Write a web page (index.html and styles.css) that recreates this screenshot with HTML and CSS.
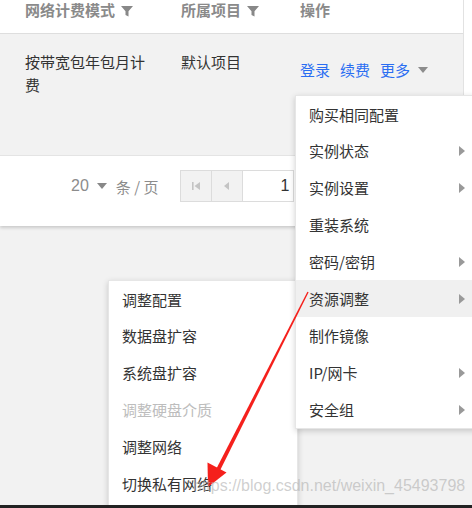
FILE: index.html
```html
<!DOCTYPE html>
<html lang="zh">
<head>
<meta charset="utf-8">
<link rel="stylesheet" href="styles.css">
</head>
<body>
<div class="page">
  <div class="card">
    <div class="table">
      <div class="thead">
        <div class="th">网络计费模式 <svg class="filter" viewBox="0 0 12 12"><path d="M0 1h12L7.5 6.2V11.5L4.5 10V6.2Z"/></svg></div>
        <div class="th">所属项目 <svg class="filter" viewBox="0 0 12 12"><path d="M0 1h12L7.5 6.2V11.5L4.5 10V6.2Z"/></svg></div>
        <div class="th">操作</div>
      </div>
      <div class="trow">
        <div class="td">按带宽包年包月计费</div>
        <div class="td">默认项目</div>
        <div class="td ops"><a>登录</a><a>续费</a><a>更多</a><span class="caret"></span></div>
      </div>
    </div>
    <div class="pager">
      <span class="size">20</span><span class="caret g"></span><span class="unit">条 / 页</span>
      <div class="pbox">
        <div class="pbtn"><svg viewBox="0 0 10 10"><path d="M1 1h1.6v8H1zM9 1v8L3.5 5z"/></svg></div>
        <div class="pbtn"><svg viewBox="0 0 10 10"><path d="M7 1v8L2 5z"/></svg></div>
        <div class="pinput">1</div>
      </div>
    </div>
  </div>

  <div class="submenu">
    <div class="mi">调整配置</div>
    <div class="mi">数据盘扩容</div>
    <div class="mi">系统盘扩容</div>
    <div class="mi disabled">调整硬盘介质</div>
    <div class="mi">调整网络</div>
    <div class="mi">切换私有网络</div>
  </div>

  <div class="menu">
    <div class="mi">购买相同配置</div>
    <div class="mi">实例状态<span class="tri"></span></div>
    <div class="mi">实例设置<span class="tri"></span></div>
    <div class="mi">重装系统</div>
    <div class="mi">密码/密钥<span class="tri"></span></div>
    <div class="mi active">资源调整<span class="tri"></span></div>
    <div class="mi">制作镜像</div>
    <div class="mi">IP/网卡<span class="tri"></span></div>
    <div class="mi">安全组<span class="tri"></span></div>
  </div>

  <svg class="arrow" viewBox="0 0 472 508" width="472" height="508">
    <polygon points="307.4,291.7 308.6,292.3 219.8,470.9 216.2,469.1" />
    <polygon points="207.5,462.5 226.5,472.5 208,487" />
  </svg>

  <div class="watermark">https://blog.csdn.net/weixin_45493798</div>
  <div class="bottombar"></div>
</div>
</body>
</html>
```

FILE: styles.css
```css
* { box-sizing: border-box; }
html, body { margin: 0; padding: 0; }
body {
  width: 472px;
  height: 508px;
  overflow: hidden;
  background: #f2f2f2;
  font-family: "Noto Sans CJK SC", "Liberation Sans", sans-serif;
  font-size: 15px;
  color: #333;
}
.page { position: relative; width: 472px; height: 508px; }

.card {
  background: #fff;
  box-shadow: 0 2px 3px rgba(0,0,0,0.16);
}
.table {
  width: 464px;
  border-right: 1px solid #e2e2e2;
}
.thead {
  display: grid;
  grid-template-columns: 156px 119px 1fr;
  padding-left: 25px;
  height: 34px;
  border-bottom: 1px solid #dedede;
  line-height: 20px;
}
.th {
  color: #8a8a8a;
  font-weight: bold;
  display: flex;
  align-items: center;
  height: 20px;
}
.filter { width: 12px; height: 12px; fill: #888; margin-left: 6px; margin-top: 2px; }
.trow {
  display: grid;
  grid-template-columns: 156px 119px 1fr;
  padding-left: 25px;
  padding-top: 16px;
  height: 122px;
  background: #f2f2f2;
  border-bottom: 1px solid #e4e4e4;
  line-height: 23px;
}
.td { padding-right: 26px; }
.ops {
  padding-top: 8px;
  display: flex;
  align-items: flex-start;
  gap: 10px;
  color: #2b6ef2;
}
.ops a { cursor: pointer; }
.caret {
  display: inline-block;
  width: 0; height: 0;
  border-left: 5px solid transparent;
  border-right: 5px solid transparent;
  border-top: 6px solid #8c8c8c;
  margin-top: 9px;
  margin-left: -2px;
}
.pager {
  display: flex;
  align-items: center;
  padding: 14px 0 24px 71px;
  color: #8c8c8c;
}
.size { margin-right: 8px; font-family: "Liberation Sans", sans-serif; font-size: 16px; }
.caret.g { margin: 0 9px 0 0; border-top-color: #888; }
.unit { margin-right: 22px; }
.pbox {
  display: flex;
  height: 32px;
  border: 1px solid #dcdcdc;
}
.pbtn {
  width: 31px;
  background: #f2f2f2;
  border-right: 1px solid #dcdcdc;
  display: flex;
  align-items: center;
  justify-content: center;
}
.pbtn svg { width: 10px; height: 10px; fill: #c4c4c4; }
.pinput {
  width: 50px;
  text-align: right;
  padding-right: 4px;
  line-height: 30px;
  color: #333;
  font-family: "Liberation Sans", sans-serif;
  font-size: 16px;
}

.menu {
  position: absolute;
  left: 295px;
  top: 95px;
  width: 185px;
  background: #fff;
  border: 1px solid #e6e6e6;
  box-shadow: 0 2px 6px rgba(0,0,0,0.18);
  z-index: 3;
}
.submenu {
  position: absolute;
  left: 108px;
  top: 280px;
  width: 190px;
  height: 240px;
  background: #fff;
  border: 1px solid #e6e6e6;
  box-shadow: 0 2px 6px rgba(0,0,0,0.18);
  z-index: 2;
}
.mi {
  height: 37px;
  display: flex;
  align-items: center;
  justify-content: space-between;
  padding: 0 14px 0 13px;
  color: #333;
}
.submenu .mi:first-child { height: 36px; }
.menu .mi:first-child { height: 36px; }
.mi.active { background: #f0f0f0; }
.mi.disabled { color: #bdbdbd; }
.tri {
  width: 0; height: 0;
  border-top: 5px solid transparent;
  border-bottom: 5px solid transparent;
  border-left: 6px solid #999;
}
.arrow {
  position: absolute;
  left: 0; top: 0;
  z-index: 4;
  fill: #f5201c;
  pointer-events: none;
}
.watermark {
  position: absolute;
  left: 193px;
  top: 477px;
  font-family: "Liberation Sans", sans-serif;
  font-size: 16px;
  color: rgba(175,175,175,0.6);
  z-index: 5;
  white-space: nowrap;
}
.bottombar {
  position: absolute;
  left: 0; right: 0; bottom: 0;
  height: 3px;
  background: #222;
  z-index: 6;
}
```
